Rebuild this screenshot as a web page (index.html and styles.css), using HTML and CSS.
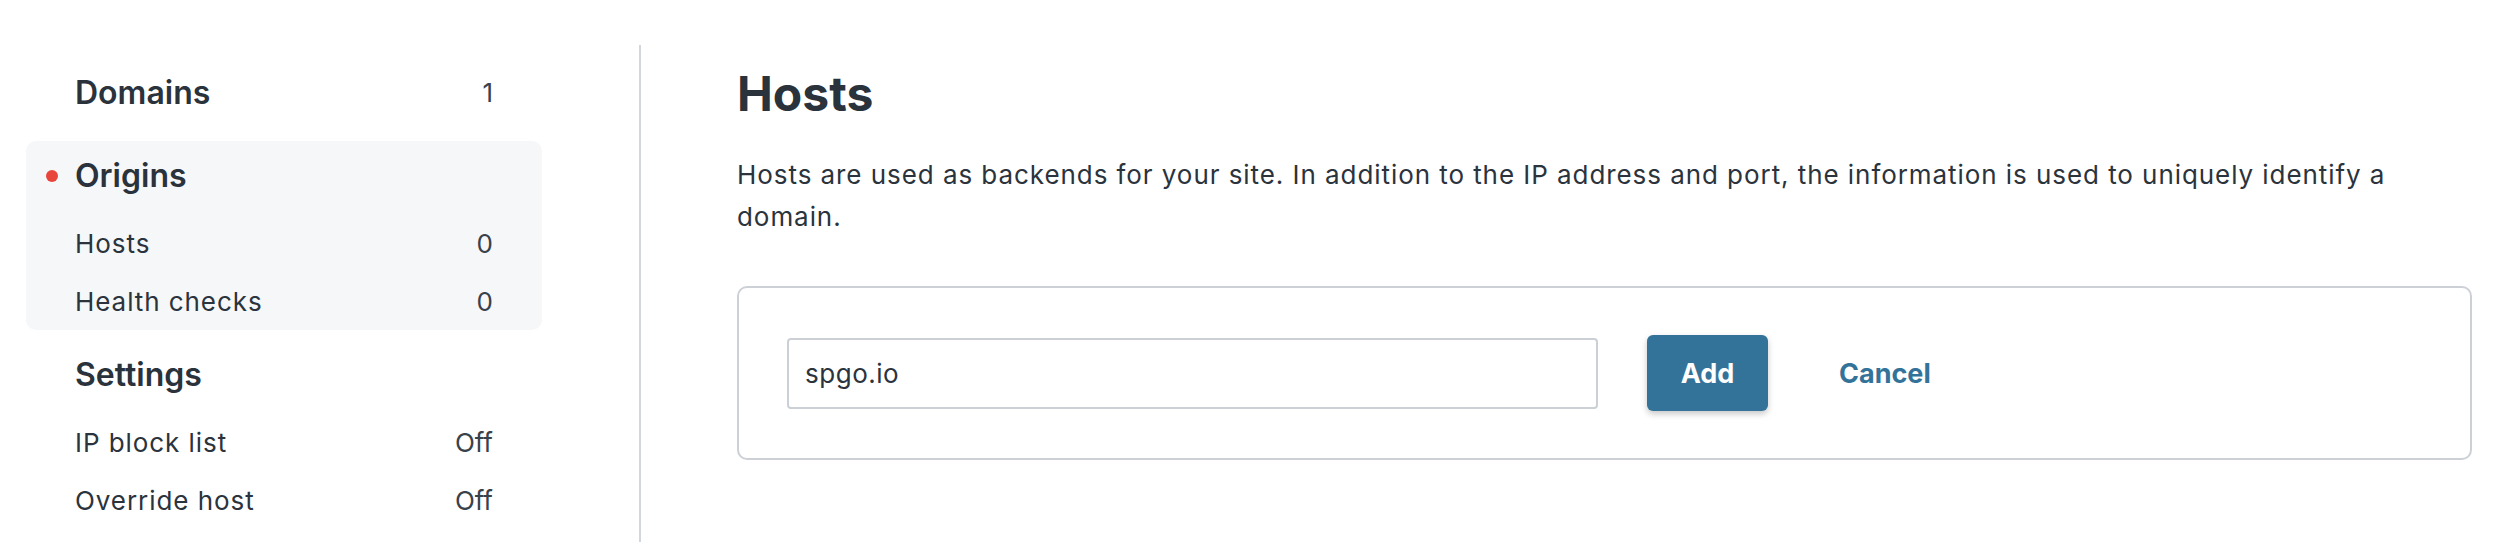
FILE: index.html
```html
<!DOCTYPE html>
<html lang="en">
<head>
<meta charset="utf-8">
<title>Hosts</title>
<link rel="stylesheet" href="styles.css">
</head>
<body>
<div class="page">
  <nav class="sidebar">
    <div class="group">
      <div class="group-head"><span class="label">Domains</span><span class="count">1</span></div>
    </div>
    <div class="group group-active">
      <div class="group-head"><span class="dot"></span><span class="label">Origins</span></div>
      <div class="item"><span>Hosts</span><span class="count">0</span></div>
      <div class="item"><span>Health checks</span><span class="count">0</span></div>
    </div>
    <div class="group">
      <div class="group-head"><span class="label">Settings</span></div>
      <div class="item"><span>IP block list</span><span class="count">Off</span></div>
      <div class="item"><span>Override host</span><span class="count">Off</span></div>
    </div>
  </nav>
  <main class="main">
    <h1 class="title">Hosts</h1>
    <p class="intro">Hosts are used as backends for your site. In addition to the IP address and port, the information is used to uniquely identify a domain.</p>
    <form class="card">
      <input class="field" type="text" value="spgo.io">
      <button class="btn-primary" type="button">Add</button>
      <button class="btn-link" type="button">Cancel</button>
    </form>
  </main>
</div>
</body>
</html>
```

FILE: styles.css
```css
* { box-sizing: border-box; }

html, body {
  margin: 0;
  padding: 0;
  background: #ffffff;
}

body {
  font-family: Inter, "Noto Sans", "Liberation Sans", sans-serif;
  color: #2b333d;
  height: 542px;
  overflow: hidden;
}

.page {
  display: flex;
  padding-top: 45px;
  height: 542px;
}

.sidebar {
  width: 639px;
  flex: none;
  padding: 13px 0 0 26px;
  display: flex;
  flex-direction: column;
  gap: 10px;
}

.group {
  width: 516px;
  border-radius: 10px;
}

.group-active {
  background: #f6f7f9;
}

.group-head {
  height: 73px;
  padding: 0 49px 4px 49px;
  display: flex;
  align-items: center;
  justify-content: space-between;
  font-size: 32px;
  font-weight: 600;
  color: #2a323c;
}

.group-active .group-head {
  padding-left: 20px;
  justify-content: flex-start;
}

.dot {
  width: 12px;
  height: 12px;
  border-radius: 50%;
  background: #e8453c;
  margin-right: 17px;
  flex: none;
}

.group-head .count {
  font-weight: 400;
  font-size: 26px;
  color: #39414b;
}

.item {
  height: 58px;
  padding: 0 49px;
  display: flex;
  align-items: center;
  justify-content: space-between;
  font-size: 26px;
  letter-spacing: 0.036em;
  color: #2b333d;
}

.count {
  color: #39414b;
  letter-spacing: 0;
}

.main {
  flex: 1;
  border-left: 2px solid #d3d7dc;
  padding: 20px 32px 0 96px;
}

.title {
  margin: 0;
  font-size: 48px;
  line-height: 58px;
  font-weight: 700;
  color: #2a323c;
}

.intro {
  margin: 31px 0 0 0;
  font-size: 26px;
  line-height: 42px;
  letter-spacing: 0.036em;
  color: #2b333d;
}

.card {
  margin: 48px 0 0 0;
  border: 2px solid #cdd1d7;
  border-radius: 10px;
  padding: 47px 48px;
  display: flex;
  align-items: center;
}

.field {
  width: 811px;
  height: 71px;
  border: 2px solid #cbd0d6;
  border-radius: 4px;
  padding: 0 16px;
  font-family: inherit;
  font-size: 26px;
  letter-spacing: 0.02em;
  color: #2b333d;
  background: #ffffff;
  outline: none;
}

.btn-primary {
  margin-left: 49px;
  width: 121px;
  height: 76px;
  border: none;
  border-radius: 6px;
  background: #337399;
  color: #ffffff;
  font-family: inherit;
  font-size: 27px;
  font-weight: 700;
  box-shadow: 0 3px 6px rgba(0, 0, 0, 0.22);
  padding: 0;
}

.btn-link {
  margin-left: 71px;
  border: none;
  background: transparent;
  color: #337399;
  font-family: inherit;
  font-size: 27px;
  font-weight: 700;
  padding: 0;
}
```
